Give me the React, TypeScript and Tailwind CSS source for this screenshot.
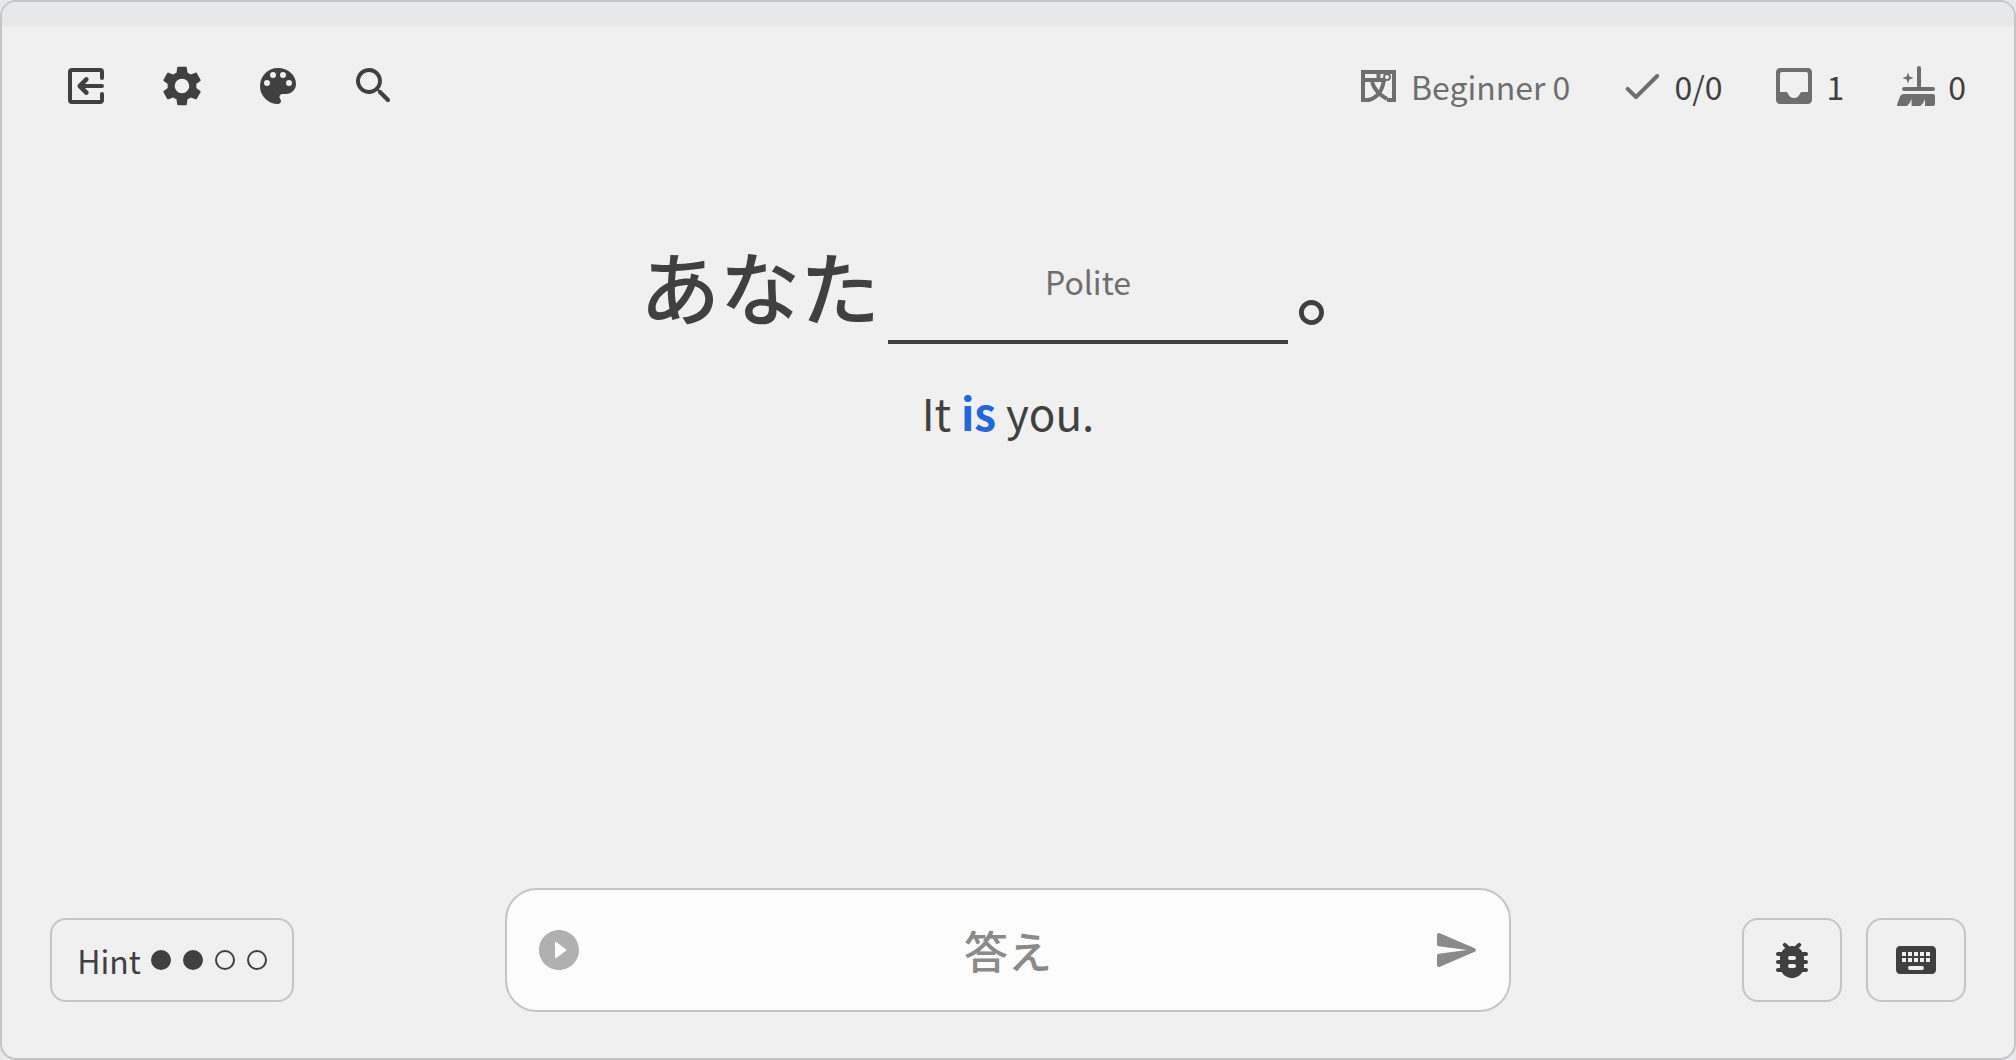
import clsx from "clsx";
import type { ReactNode } from "react";

const icons = {
  exit: "M5 3h14q2 0 2 2v3q0 1-1 1t-1-1V5H5v14h14v-3q0-1 1-1t1 1v3q0 2-2 2H5q-2 0-2-2V5q0-2 2-2zm6.5 4.8q.8-.6 1.500.1t.1 1.500L11.500 11H20q1 0 1 1t-1 1h-8.500l1.600 1.600q.6.8-.1 1.500t-1.500.1l-3.500-3.500q-.6-.7 0-1.400z",
  settings:
    "M19.14 12.94c.04-.3.06-.61.06-.94 0-.32-.02-.64-.07-.94l2.03-1.58c.18-.14.23-.41.12-.61l-1.92-3.32c-.12-.22-.37-.29-.59-.22l-2.39.96c-.5-.38-1.03-.7-1.62-.94l-.36-2.54c-.04-.24-.24-.41-.48-.41h-3.84c-.24 0-.43.17-.47.41l-.36 2.54c-.59.24-1.13.57-1.62.94l-2.39-.96c-.22-.08-.47 0-.59.22L2.74 8.87c-.12.21-.08.47.12.61l2.03 1.58c-.05.3-.09.63-.09.94s.02.64.07.94l-2.03 1.58c-.18.14-.23.41-.12.61l1.92 3.32c.12.22.37.29.59.22l2.39-.96c.5.38 1.03.7 1.62.94l.36 2.54c.05.24.24.41.48.41h3.84c.24 0 .44-.17.47-.41l.36-2.54c.59-.24 1.13-.56 1.62-.94l2.39.96c.22.08.47 0 .59-.22l1.92-3.32c.12-.22.07-.47-.12-.61l-2.01-1.58zM12 15.6c-1.98 0-3.6-1.62-3.6-3.6s1.62-3.6 3.6-3.6 3.6 1.62 3.6 3.6-1.62 3.6-3.6 3.6z",
  palette:
    "M12 3a9 9 0 0 0 0 18c.83 0 1.5-.67 1.5-1.5 0-.39-.15-.74-.39-1.01-.23-.26-.38-.61-.38-.99 0-.83.67-1.5 1.5-1.5H16c2.76 0 5-2.24 5-5 0-4.42-4.03-8-9-8zm-5.5 9a1.5 1.5 0 1 1 0-3 1.5 1.5 0 0 1 0 3zm3-4a1.5 1.5 0 1 1 0-3 1.5 1.5 0 0 1 0 3zm5 0a1.5 1.5 0 1 1 0-3 1.5 1.5 0 0 1 0 3zm3 4a1.5 1.5 0 1 1 0-3 1.5 1.5 0 0 1 0 3z",
  search:
    "M15.5 14h-.79l-.28-.27a6.5 6.5 0 1 0-.7.7l.27.28v.79l4.25 4.25c.41.41 1.08.41 1.49 0s.41-1.08 0-1.49L15.5 14zm-6 0C7.01 14 5 11.99 5 9.5S7.01 5 9.5 5 14 7.01 14 9.5 11.99 14 9.5 14z",
  check:
    "M9 16.17L5.53 12.7a.996.996 0 1 0-1.41 1.41l4.18 4.18c.39.39 1.02.39 1.41 0L20.29 7.71a.996.996 0 1 0-1.41-1.41L9 16.17z",
  inbox:
    "M19 3H5c-1.1 0-2 .9-2 2v14c0 1.1.9 2 2 2h14c1.1 0 2-.9 2-2V5c0-1.1-.9-2-2-2zm0 12h-3c-.35 0-.65.2-.8.5C14.6 17 13.4 18 12 18s-2.6-1-3.2-2.5c-.15-.3-.45-.5-.8-.5H5V6q0-1 1-1h12q1 0 1 1z",
  send: "M3.4 20.4l17.45-7.48c.81-.35.81-1.49 0-1.84L3.4 3.6c-.66-.29-1.39.2-1.39.91L2 9.12c0 .5.37.93.87.99L17 12 2.87 13.88c-.5.07-.87.5-.87 1l.01 4.61c0 .71.73 1.2 1.39.91z",
  play: "M12 2C6.48 2 2 6.48 2 12s4.48 10 10 10 10-4.48 10-10S17.52 2 12 2zm-2 13.5v-7c0-.41.47-.65.8-.4l4.67 3.5c.27.2.27.6 0 .8l-4.67 3.5c-.33.25-.8.01-.8-.4z",
  bug: "M19 8h-1.81a5.985 5.985 0 0 0-1.82-1.96l.93-.93a.996.996 0 1 0-1.41-1.41l-1.47 1.47a6.016 6.016 0 0 0-2.83 0L9.11 3.7A.996.996 0 1 0 7.7 5.11l.92.93C7.88 6.55 7.26 7.22 6.81 8H5c-.55 0-1 .45-1 1s.45 1 1 1h1.09c-.05.33-.09.66-.09 1v1H5c-.55 0-1 .45-1 1s.45 1 1 1h1v1c0 .34.04.67.09 1H5c-.55 0-1 .45-1 1s.45 1 1 1h1.81c1.04 1.79 2.97 3 5.19 3s4.15-1.21 5.19-3H19c.55 0 1-.45 1-1s-.45-1-1-1h-1.09c.05-.33.09-.66.09-1v-1h1c.55 0 1-.45 1-1s-.45-1-1-1h-1v-1c0-.34-.04-.67-.09-1H19c.55 0 1-.45 1-1s-.45-1-1-1zm-6 8h-2c-.55 0-1-.45-1-1s.45-1 1-1h2c.55 0 1 .45 1 1s-.45 1-1 1zm0-4h-2c-.55 0-1-.45-1-1s.45-1 1-1h2c.55 0 1 .45 1 1s-.45 1-1 1z",
  keyboard:
    "M20 5H4c-1.1 0-2 .9-2 2v10c0 1.1.9 2 2 2h16c1.1 0 2-.9 2-2V7c0-1.1-.9-2-2-2zm-9 3h2v2h-2V8zm0 3h2v2h-2v-2zM8 8h2v2H8V8zm0 3h2v2H8v-2zm-1 2H5v-2h2v2zm0-3H5V8h2v2zm8 7H9c-.55 0-1-.45-1-1s.45-1 1-1h6c.55 0 1 .45 1 1s-.45 1-1 1zm1-4h-2v-2h2v2zm0-3h-2V8h2v2zm3 3h-2v-2h2v2zm0-3h-2V8h2v2z",
  broom:
    "M13.5 2q1 0 1 1v9.5h6q1 0 1 1t-1 1H6q-1 0-1-1t1-1h6.500V3q0-1 1-1zM8 5.2l.7 2.1 2.1.7-2.1.7L8 10.800l-.7-2.1L5.200 8l2.1-.7zM6 16h14.500q1 0 1 1v4q0 1-1 1h-4v-3.500q-.7 2.2-2.3 3.500H9.800v-3.500Q9.100 20.700 7.500 22H3q-.8 0-.4-1l1.500-4q.4-1 1.900-1z",
};

function Icon({ name, className }: { name: keyof typeof icons; className?: string }) {
  return (
    <svg viewBox="0 0 24 24" fill="currentColor" fillRule="evenodd" aria-hidden="true" className={clsx("shrink-0", className)}>
      <path d={icons[name]} />
    </svg>
  );
}

function LevelIcon() {
  return (
    <svg viewBox="0 0 36 32" fill="none" stroke="currentColor" aria-hidden="true" className="h-8 w-9 shrink-0">
      <path d="M2 32V2h31v30M0 30h9M26 30h9" strokeWidth="4" />
      <path d="M4 10h21M23 9c-1 10-6 19-16 21" strokeWidth="4" />
      <path d="M11 12c2 7 6 12 15 17" strokeWidth="4" />
      <path d="M17.5 4v4" strokeWidth="4" />
      <circle cx="26" cy="7" r="3" strokeWidth="2" fill="#f0f0f0" />
    </svg>
  );
}

function ToolButton({ name, label }: { name: keyof typeof icons; label: string }) {
  return (
    <button type="button" aria-label={label}>
      <Icon name={name} className="size-12" />
    </button>
  );
}

function Stat({ icon, children }: { icon: ReactNode; children: ReactNode }) {
  return (
    <div className="flex items-center gap-2">
      <span className="text-[#6e6e6e]">{icon}</span>
      <span>{children}</span>
    </div>
  );
}

export default function App() {
  return (
    <div className="min-h-screen flex bg-[#e6e8ea] text-[#404040] font-['Noto_Sans_CJK_JP',sans-serif]">
      <div className="flex-1 flex flex-col rounded-2xl border-2 border-[#c5c5c5] bg-[#f0f0f0] overflow-hidden">
        <div className="h-6 bg-[#e6e8ea]" />
        <header className="flex items-center justify-between pl-15 pr-12 pt-9">
          <nav className="flex gap-12">
            <ToolButton name="exit" label="Exit" />
            <ToolButton name="settings" label="Settings" />
            <ToolButton name="palette" label="Theme" />
            <ToolButton name="search" label="Search" />
          </nav>
          <div className="flex items-center gap-12 text-[32px] leading-12">
            <div className="flex items-center gap-3.5 text-[#6e6e6e]">
              <LevelIcon />
              <span>Beginner 0</span>
            </div>
            <Stat icon={<Icon name="check" className="size-12" />}>0/0</Stat>
            <Stat icon={<Icon name="inbox" className="size-12" />}>1</Stat>
            <Stat icon={<Icon name="broom" className="size-12" />}>0</Stat>
          </div>
        </header>

        <main className="flex-1 flex flex-col items-center pt-31">
          <div lang="ja" className="flex items-start gap-2 h-[110px] text-[80px] leading-25 font-medium">
            <span>あなた</span>
            <input
              type="text"
              aria-label="Missing word"
              placeholder="Polite"
              className="w-100 h-full pb-3 border-b-4 border-[#404040] text-center text-[32px] font-normal placeholder:text-[#6e6e6e] outline-none"
            />
            <span>。</span>
          </div>
          <p className="mt-8 text-[44px] leading-18">
            It <b className="text-[#2068dc]">is</b> you.
          </p>
        </main>

        <footer className="grid grid-cols-[1fr_2fr_1fr] items-end pb-[46px]">
          <button
            type="button"
            className="justify-self-start h-21 w-61 ml-12 mb-[10px] flex items-center justify-center gap-2.5 rounded-2xl border-2 border-[#c5c5c5] text-[32px]"
          >
            Hint
            <span className="flex gap-3">
              <span className="size-5 rounded-full border-2 border-[#404040] bg-[#404040]" />
              <span className="size-5 rounded-full border-2 border-[#404040] bg-[#404040]" />
              <span className="size-5 rounded-full border-2 border-[#404040]" />
              <span className="size-5 rounded-full border-2 border-[#404040]" />
            </span>
          </button>
          <form className="flex items-center h-31 px-7 rounded-[32px] border-2 border-[#c5c5c5] bg-[#fcfcfc]">
            <button type="button" aria-label="Play" className="text-[#b0b0b0]">
              <Icon name="play" className="size-12" />
            </button>
            <input
              type="text"
              lang="ja"
              aria-label="Answer"
              placeholder="答え"
              className="flex-1 min-w-0 text-center text-[44px] font-medium placeholder:text-[#8a8a8a] outline-none"
            />
            <button type="button" aria-label="Send" className="text-[#8a8a8a]">
              <Icon name="send" className="size-12" />
            </button>
          </form>
          <div className="justify-self-end flex gap-6 mr-12 mb-[10px]">
            <button type="button" aria-label="Report a problem" className="h-21 w-25 flex items-center justify-center rounded-2xl border-2 border-[#c5c5c5]">
              <Icon name="bug" className="size-12" />
            </button>
            <button type="button" aria-label="Keyboard" className="h-21 w-25 flex items-center justify-center rounded-2xl border-2 border-[#c5c5c5]">
              <Icon name="keyboard" className="size-12" />
            </button>
          </div>
        </footer>
      </div>
    </div>
  );
}
